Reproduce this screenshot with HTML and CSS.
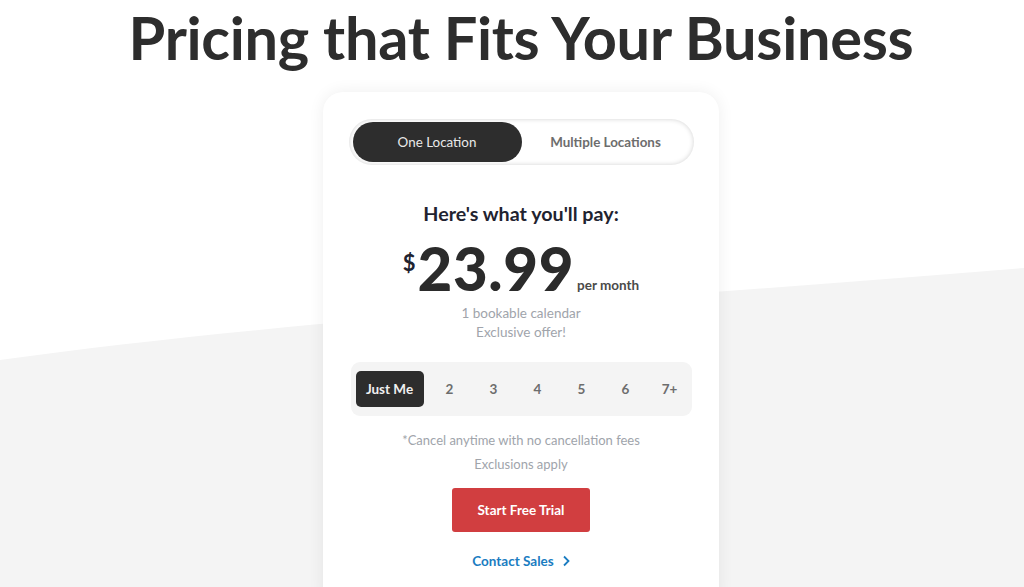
FILE: index.html
```html
<!DOCTYPE html>
<html lang="en">
<head>
    <meta charset="UTF-8">
    <meta name="viewport" content="width=device-width, initial-scale=1.0">
    <title>Pricing</title>
    <link rel="stylesheet" href="styles.css">
</head>

<body>
    <svg class="bg-wave" viewBox="0 0 1024 587" preserveAspectRatio="none" aria-hidden="true">
        <path d="M0 360 C 300 318, 700 295, 1024 268 L1024 587 L0 587 Z" fill="#f4f4f4"/>
    </svg>

    <main class="pricing">
        <h1>Pricing that Fits Your Business</h1>

        <div class="card">
            <div class="toggle">
                <button class="toggle-option active">One Location</button>
                <button class="toggle-option">Multiple Locations</button>
            </div>

            <h2>Here's what you'll pay:</h2>

            <div class="price">
                <span class="currency">$</span>
                <span class="amount">23.99</span>
                <span class="period">per month</span>
            </div>
            <p class="note">1 bookable calendar</p>
            <p class="note">Exclusive offer!</p>

            <div class="seats">
                <button class="seat active">Just Me</button>
                <button class="seat">2</button>
                <button class="seat">3</button>
                <button class="seat">4</button>
                <button class="seat">5</button>
                <button class="seat">6</button>
                <button class="seat">7+</button>
            </div>

            <p class="fine">*Cancel anytime with no cancellation fees</p>
            <p class="fine">Exclusions apply</p>

            <button class="trial-button">Start Free Trial</button>

            <a class="contact-link" href="#">Contact Sales
                <svg width="8" height="12" viewBox="0 0 8 12"><path d="M2 1.5 L6.5 6 L2 10.5" fill="none" stroke="currentColor" stroke-width="1.8"/></svg>
            </a>
        </div>
    </main>
</body>
</html>
```

FILE: styles.css
```css
body {
    font-family: "Lato", "Open Sans", Arial, sans-serif;
    margin: 0;
    background-color: #ffffff;
    color: #2b2b2b;
    overflow: hidden;
    height: 587px;
    position: relative;
}

.bg-wave {
    position: absolute;
    left: 0;
    top: 0;
    width: 100%;
    height: 100%;
    z-index: 0;
}

.pricing {
    position: relative;
    z-index: 1;
    display: flex;
    flex-direction: column;
    align-items: center;
    padding-left: 18px;
}

h1 {
    font-size: 59.5px;
    font-weight: 700;
    color: #2d2d2d;
    margin: 0;
    padding-top: 2px;
    line-height: 70px;
    letter-spacing: -0.3px;
}

.card {
    width: 396px;
    box-sizing: border-box;
    margin-top: 20px;
    background-color: #ffffff;
    border-radius: 20px;
    box-shadow: 0 0 16px rgba(0, 0, 0, 0.07);
    padding: 27px 25px 40px;
    display: flex;
    flex-direction: column;
    align-items: center;
}

.toggle {
    width: 345px;
    height: 46px;
    box-sizing: border-box;
    padding: 3px 4px;
    border-radius: 23px;
    background-color: #ffffff;
    box-shadow: inset 0 0 5px rgba(0, 0, 0, 0.18);
    display: flex;
}

.toggle-option {
    flex: 1;
    border: none;
    background: none;
    border-radius: 20px;
    font-family: inherit;
    font-size: 13.4px;
    font-weight: 700;
    color: #6d6d6d;
    cursor: pointer;
}

.toggle-option.active {
    flex: 0 0 169px;
    background-color: #2d2d2d;
    color: #e9e9e9;
    font-weight: 400;
}

h2 {
    font-size: 19.7px;
    font-weight: 700;
    color: #1f2330;
    margin: 37px 0 0;
    line-height: 24px;
}

.price {
    display: flex;
    align-items: flex-end;
    margin-top: 12px;
    height: 60px;
}

.currency {
    align-self: flex-start;
    font-size: 22px;
    font-weight: 700;
    color: #1f2330;
    line-height: 22px;
    margin-top: 14px;
    margin-right: 2px;
}

.amount {
    font-size: 60px;
    font-weight: 900;
    color: #2b2b2b;
    line-height: 60px;
    letter-spacing: 0.6px;
}

.period {
    font-size: 13.5px;
    font-weight: 700;
    color: #4a4a4a;
    line-height: 16px;
    margin-left: 3px;
    margin-bottom: 5px;
}

.note {
    margin: 5px 0 0;
    font-size: 13.5px;
    line-height: 14px;
    color: #a0a4ab;
}

.note:first-of-type {
    margin-top: 8px;
}

.seats {
    width: 341px;
    height: 54px;
    box-sizing: border-box;
    margin-top: 23px;
    padding: 9px 0 9px 5px;
    border-radius: 9px;
    background-color: #f4f4f4;
    display: flex;
    align-items: stretch;
}

.seat {
    flex: 1;
    border: none;
    background: none;
    border-radius: 5px;
    font-family: inherit;
    font-size: 13.5px;
    font-weight: 700;
    color: #6d6d6d;
    cursor: pointer;
}

.seat.active {
    flex: 0 0 68px;
    margin-right: 4px;
    background-color: #2d2d2d;
    color: #f0f0f0;
}

.fine {
    margin: 0;
    font-size: 13px;
    line-height: 24px;
    color: #a0a4ab;
}

.seats + .fine {
    margin-top: 12px;
}

.trial-button {
    margin-top: 12px;
    width: 138px;
    height: 44px;
    border: none;
    border-radius: 3px;
    background-color: #d13e40;
    color: #ffffff;
    font-family: inherit;
    font-size: 13.5px;
    font-weight: 700;
    cursor: pointer;
}

.contact-link {
    margin-top: 21px;
    display: flex;
    align-items: center;
    gap: 8px;
    color: #1a7cc1;
    font-size: 13.5px;
    font-weight: 700;
    text-decoration: none;
}
```
